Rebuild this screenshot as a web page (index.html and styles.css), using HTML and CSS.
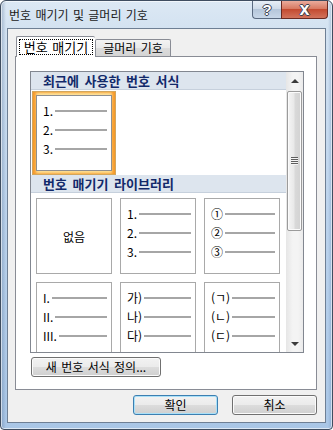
FILE: index.html
```html
<!DOCTYPE html>
<html lang="ko">
<head>
  <meta charset="UTF-8">
  <title>번호 매기기 및 글머리 기호</title>
  <link rel="stylesheet" href="styles.css">
</head>
<body>
  <div class="window">
    <!-- Title bar -->
    <div class="titlebar">
      <span class="title">번호 매기기 및 글머리 기호</span>
      <div class="caption-buttons">
        <span class="cap-btn help">?</span>
        <span class="cap-btn close">x</span>
      </div>
    </div>

    <div class="client">
      <!-- Tabs -->
      <div class="tabs">
        <div class="tab active"><span class="focus">번호 매기기</span></div>
        <div class="tab">글머리 기호</div>
      </div>

      <div class="tab-page">
        <div class="gallery">
          <div class="gallery-list">
            <div class="group-header">최근에 사용한 번호 서식</div>
            <div class="grid">
              <div class="slot selected">
                <div class="cell">
                  <div class="num-row"><span>1.</span><i class="rule"></i></div>
                  <div class="num-row"><span>2.</span><i class="rule"></i></div>
                  <div class="num-row"><span>3.</span><i class="rule"></i></div>
                </div>
              </div>
            </div>

            <div class="group-header">번호 매기기 라이브러리</div>
            <div class="grid">
              <div class="slot">
                <div class="cell cell-none">없음</div>
              </div>
              <div class="slot">
                <div class="cell">
                  <div class="num-row"><span>1.</span><i class="rule"></i></div>
                  <div class="num-row"><span>2.</span><i class="rule"></i></div>
                  <div class="num-row"><span>3.</span><i class="rule"></i></div>
                </div>
              </div>
              <div class="slot">
                <div class="cell">
                  <div class="num-row"><span>①</span><i class="rule"></i></div>
                  <div class="num-row"><span>②</span><i class="rule"></i></div>
                  <div class="num-row"><span>③</span><i class="rule"></i></div>
                </div>
              </div>
              <div class="slot">
                <div class="cell">
                  <div class="num-row"><span>I.</span><i class="rule"></i></div>
                  <div class="num-row"><span>II.</span><i class="rule"></i></div>
                  <div class="num-row"><span>III.</span><i class="rule"></i></div>
                </div>
              </div>
              <div class="slot">
                <div class="cell">
                  <div class="num-row"><span>가)</span><i class="rule"></i></div>
                  <div class="num-row"><span>나)</span><i class="rule"></i></div>
                  <div class="num-row"><span>다)</span><i class="rule"></i></div>
                </div>
              </div>
              <div class="slot">
                <div class="cell">
                  <div class="num-row"><span>(ㄱ)</span><i class="rule"></i></div>
                  <div class="num-row"><span>(ㄴ)</span><i class="rule"></i></div>
                  <div class="num-row"><span>(ㄷ)</span><i class="rule"></i></div>
                </div>
              </div>
            </div>
          </div>

          <!-- Scrollbar -->
          <div class="scrollbar">
            <div class="sb-btn"><i class="arrow up"></i></div>
            <div class="sb-track">
              <div class="sb-thumb"><i class="grip"></i></div>
            </div>
            <div class="sb-btn"><i class="arrow down"></i></div>
          </div>
        </div>

        <button type="button" class="btn define">새 번호 서식 정의...</button>
      </div>

      <!-- OK / Cancel -->
      <div class="dialog-buttons">
        <button type="button" class="btn default">확인</button>
        <button type="button" class="btn">취소</button>
      </div>
    </div>
  </div>
</body>
</html>
```

FILE: styles.css
```css
/* General Reset */
body {
  margin: 0;
  background: #ffffff;
  font-family: "Noto Sans CJK KR", "Noto Sans", sans-serif;
  font-size: 12px;
  color: #000;
}

/* Window frame */
.window {
  width: 333px;
  height: 430px;
  box-sizing: border-box;
  border: 1px solid #3f4d60;
  border-radius: 6px 6px 4px 4px;
  background:
    linear-gradient(to right, rgba(70, 100, 140, 0.35) 0, rgba(255, 255, 255, 0) 5px),
    linear-gradient(to left, rgba(70, 110, 160, 0.3) 0, rgba(255, 255, 255, 0) 4px),
    linear-gradient(to bottom, #dce8f4 0, #d3e2f1 28px, #bcd3ec 50%, #a9c6e6 100%);
  box-shadow: inset 0 0 0 1px rgba(255, 255, 255, 0.6);
  padding: 0 6px 6px;
  display: flex;
  flex-direction: column;
}

.titlebar {
  height: 27px;
  display: flex;
  justify-content: space-between;
  align-items: flex-start;
}

.title {
  padding: 7px 0 0 2px;
  line-height: 14px;
  color: #1a1a1a;
  word-spacing: 1px;
}

.caption-buttons {
  display: flex;
  margin-right: -2px;
}

.cap-btn {
  height: 18px;
  box-sizing: border-box;
  display: flex;
  justify-content: center;
  align-items: center;
  color: #fff;
  font-family: "Liberation Sans", sans-serif;
  font-weight: bold;
  text-shadow: 1px 0 0 #3a4150, -1px 0 0 #3a4150, 0 1px 0 #3a4150, 0 -1px 0 #3a4150;
}

.help {
  width: 29px;
  border: 1px solid #5a6a80;
  border-top: none;
  border-right: none;
  border-radius: 0 0 0 4px;
  background: linear-gradient(#e7eef6, #cfdbe9 45%, #b5c6da 50%, #c8d7e8);
  font-size: 15px;
}

.close {
  width: 47px;
  border: 1px solid #6a2a22;
  border-top: none;
  border-radius: 0 0 4px 0;
  background: linear-gradient(#eaab9c, #d87a62 45%, #c44b31 50%, #d2735c);
  font-size: 18px;
  line-height: 14px;
  padding-bottom: 2px;
}

/* Client area */
.client {
  flex: 1;
  border: 1px solid #6e7f94;
  background: #f0f0f0;
  padding: 7px 8px 0 7px;
}

.tabs {
  height: 20px;
  display: flex;
  align-items: flex-end;
  padding-left: 1px;
}

.tab {
  height: 17px;
  box-sizing: border-box;
  width: 76px;
  border: 1px solid #898c95;
  border-bottom: none;
  border-radius: 2px 2px 0 0;
  background: linear-gradient(#f3f3f3, #e9e9e9 50%, #dcdcdc 50%, #d4d4d4);
  text-align: center;
  line-height: 15px;
  word-spacing: 1px;
}

.tab.active {
  width: 79px;
  height: 21px;
  margin-bottom: -1px;
  position: relative;
  z-index: 1;
  background: #ffffff;
  padding: 2px 2px 0;
  border-right: none;
  font-size: 13px;
}

.focus {
  display: block;
  height: 16px;
  box-sizing: border-box;
  border: 1px dotted #000;
  line-height: 14px;
}

.tab-page {
  height: 334px;
  box-sizing: border-box;
  border: 1px solid #898c95;
  background: #ffffff;
  padding: 14px 0 0 14px;
}

/* Gallery list box */
.gallery {
  width: 274px;
  height: 282px;
  box-sizing: border-box;
  border: 1px solid #828790;
  display: flex;
}

.gallery-list {
  width: 255px;
  height: 280px;
  overflow: hidden;
}

.group-header {
  height: 17px;
  border-bottom: 1px solid #c6d0dc;
  background: #dde5ee;
  padding-left: 12px;
  font-size: 13px;
  font-weight: bold;
  line-height: 17px;
  color: #12296a;
  word-spacing: 2px;
}

.grid {
  display: grid;
  grid-template-columns: repeat(3, 84px);
  padding: 1px 0 0 1px;
}

.slot {
  width: 84px;
  height: 84px;
  box-sizing: border-box;
  padding: 4px;
}

.slot.selected {
  padding: 3px;
  border: 1px solid #d3a65c;
  background: linear-gradient(#fee7a4, #fbc159 50%, #fde29a);
  box-shadow: inset 3px 0 3px #f6992a, inset -3px 0 3px #f6992a;
}

.cell {
  width: 76px;
  height: 76px;
  box-sizing: border-box;
  border: 1px solid #a9a9a9;
  background: #ffffff;
  padding: 5px 4px 0 6px;
}

.selected .cell {
  border-color: #8f8f8f;
}

.cell-none {
  display: flex;
  justify-content: center;
  align-items: center;
  padding: 0;
}

.num-row {
  height: 19px;
  display: flex;
  align-items: center;
  line-height: 14px;
}

.rule {
  flex: 1;
  height: 2px;
  margin-left: 2px;
  background: #a6a6a6;
}

/* Scrollbar */
.scrollbar {
  width: 17px;
  display: flex;
  flex-direction: column;
  background: linear-gradient(to right, #e6e6e6, #f4f4f4 40%, #f4f4f4 70%, #ebebeb);
}

.sb-btn {
  height: 17px;
  display: flex;
  justify-content: center;
  align-items: center;
}

.arrow {
  width: 0;
  height: 0;
  border-left: 4px solid transparent;
  border-right: 4px solid transparent;
}

.arrow.up {
  border-bottom: 4px solid #3c3c3c;
}

.arrow.down {
  border-top: 4px solid #3c3c3c;
}

.sb-track {
  flex: 1;
  padding: 2px 1px 0;
}

.sb-thumb {
  height: 140px;
  box-sizing: border-box;
  border: 1px solid #9b9b9b;
  border-radius: 2px;
  background: linear-gradient(to right, #f5f5f5, #e9e9e9 45%, #d9d9d9 55%, #d2d2d2);
  box-shadow: inset 0 0 0 1px #fbfbfb;
  display: flex;
  justify-content: center;
  align-items: center;
}

.grip {
  width: 7px;
  height: 8px;
  background: repeating-linear-gradient(#5e5e5e 0, #5e5e5e 1px, #f4f4f4 1px, #f4f4f4 2px);
}

/* Buttons */
.btn {
  height: 20px;
  box-sizing: border-box;
  border: 1px solid #707070;
  border-radius: 3px;
  background: linear-gradient(#f2f2f2, #ebebeb 50%, #dddddd 50%, #cfcfcf);
  box-shadow: inset 0 0 0 1px #fbfbfb;
  font-family: inherit;
  font-size: 12px;
  line-height: 16px;
  padding: 0;
  color: #000;
}

.define {
  width: 130px;
  margin: 4px 0 0 1px;
  word-spacing: 1px;
}

.dialog-buttons {
  display: flex;
  justify-content: flex-end;
  gap: 14px;
  margin-top: 5px;
}

.dialog-buttons .btn {
  width: 85px;
}

.btn.default {
  border-color: #3c7fb1;
  box-shadow: inset 0 0 0 1px #a9e0f8;
}
```
